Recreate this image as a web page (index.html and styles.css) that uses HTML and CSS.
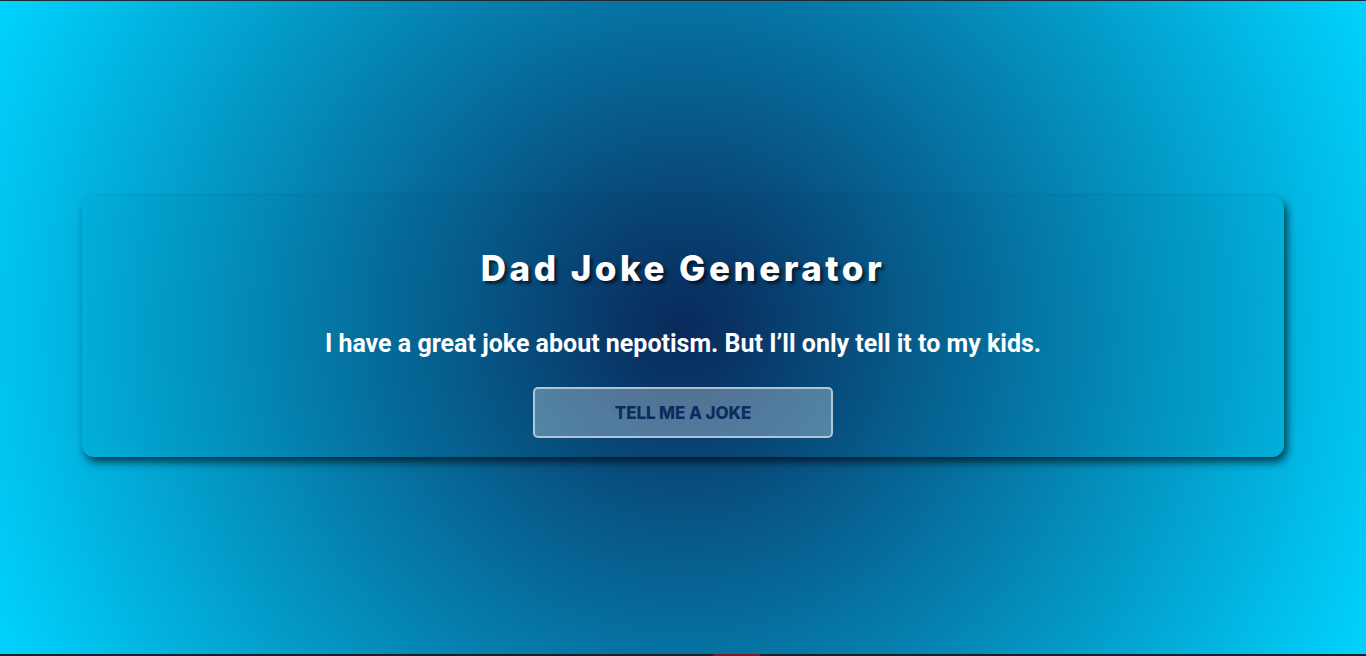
FILE: index.html
```html
<!DOCTYPE html>
<html lang="en">
<head>
<meta charset="utf-8">
<title>Dad Joke Generator</title>
<link rel="stylesheet" href="styles.css">
</head>
<body>
<div class="edge-top"></div>
<main class="stage">
  <section class="card">
    <h1 class="title">Dad Joke Generator</h1>
    <p class="joke">I have a great joke about nepotism. But I’ll only tell it to my kids.</p>
    <button class="btn" type="button">TELL ME A JOKE</button>
  </section>
</main>
<div class="edge-bottom"><span class="edge-mark"></span></div>
</body>
</html>
```
FILE: styles.css
```css
* { box-sizing: border-box; }
html, body { margin: 0; padding: 0; height: 100%; }
body {
  display: flex;
  flex-direction: column;
  min-height: 100vh;
  background: radial-gradient(circle at 50% 50%, #0a2a5c 0%, #00d4ff 100%);
  font-family: Roboto, "Liberation Sans", sans-serif;
  overflow: hidden;
}
.edge-top { height: 1px; background: #1b2a33; flex: none; }
.edge-bottom { height: 2px; background: #15202a; flex: none; display: flex; }
.edge-mark { width: 47px; margin-left: 713px; background: #7a1a22; }
.stage {
  flex: 1;
  display: flex;
  align-items: center;
  justify-content: center;
}
.card {
  width: 88%;
  height: 261px;
  margin-top: -2px;
  border-radius: 12px;
  background: rgba(0, 0, 0, 0.02);
  box-shadow: 3px 5px 9px rgba(0, 0, 0, 0.65);
  display: flex;
  flex-direction: column;
  align-items: center;
  padding-top: 50px;
}
.title {
  margin: 0;
  font-family: Inter, "Open Sans", sans-serif;
  font-weight: 800;
  font-size: 35px;
  line-height: 44px;
  letter-spacing: 3.5px;
  color: #ffffff;
  text-shadow: 3px 3px 3px rgba(0, 0, 0, 0.55);
}
.joke {
  margin: 39px 0 0;
  font-family: Roboto, "Liberation Sans", sans-serif;
  font-weight: 700;
  font-size: 25px;
  line-height: 30px;
  color: #ffffff;
}
.btn {
  margin-top: 28px;
  width: 300px;
  height: 51px;
  border: 2px solid rgba(255, 255, 255, 0.55);
  border-radius: 5px;
  background: rgba(255, 255, 255, 0.3);
  color: #0b2d5e;
  font-family: Inter, "Open Sans", sans-serif;
  font-weight: 800;
  font-size: 17px;
  letter-spacing: -0.1px;
  cursor: pointer;
}
```
